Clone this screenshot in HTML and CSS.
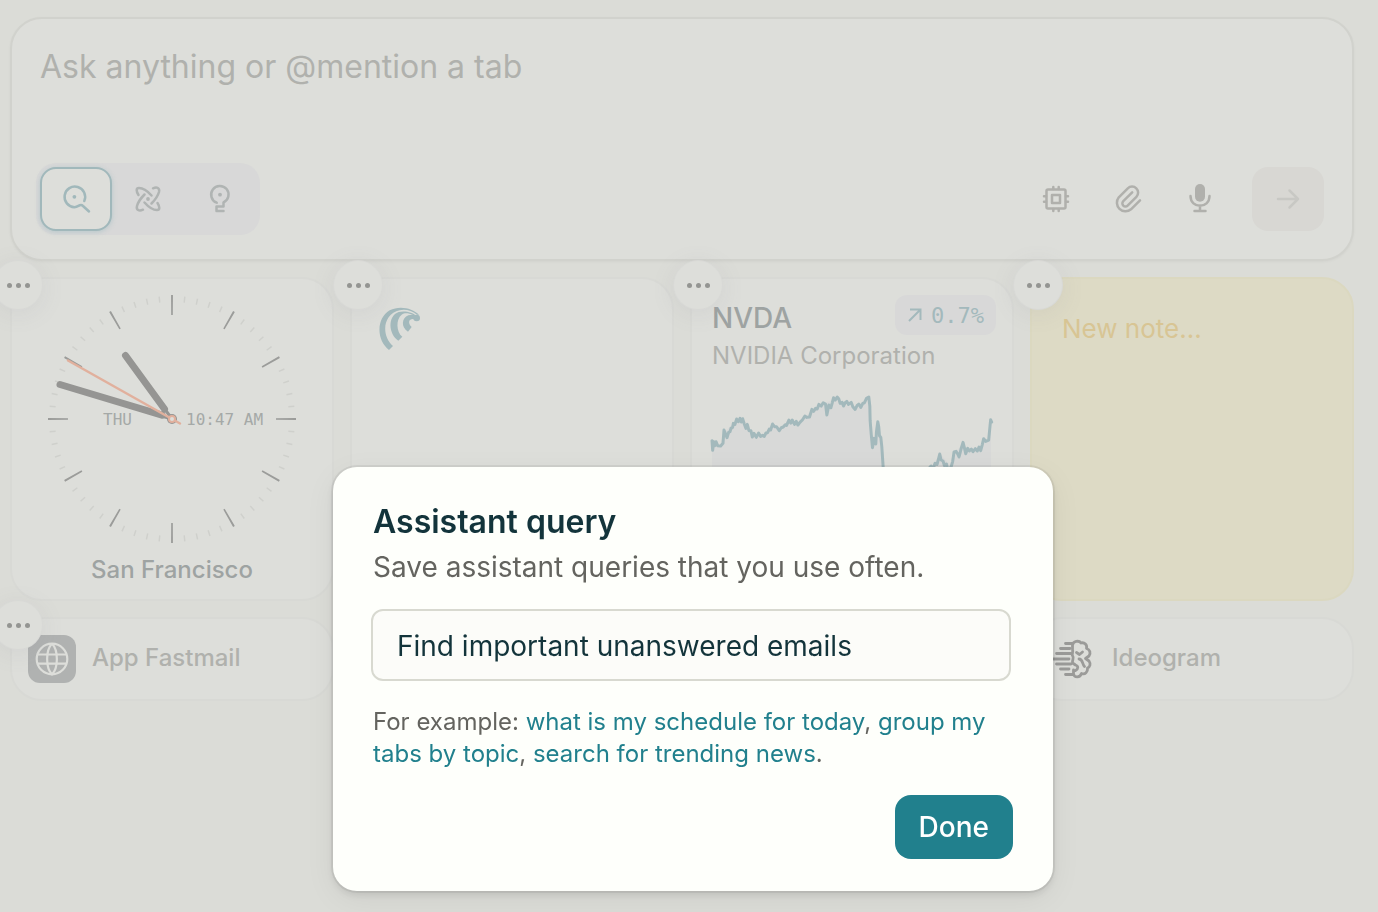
FILE: index.html
```html
<!DOCTYPE html>
<html lang="en">
<head>
  <meta charset="utf-8">
  <title>New Tab</title>
  <link rel="stylesheet" href="styles.css">
</head>
<body>
  <main class="page">
    <form class="ask">
      <textarea class="ask-input" rows="1" aria-label="Ask" placeholder="Ask anything or @mention a tab"></textarea>
      <div class="ask-bar">
        <div class="modes">
          <button type="button" class="mode active" aria-label="Search">
            <svg class="icon" viewBox="0 0 32 32"><path d="M24.3 18A10.3 10.3 0 1 0 14.4 24.2C18 24.2 18.6 22 21 22Q22 22 23 23L29 28.5"/><circle class="fill" cx="14.4" cy="13.8" r="1.9"/></svg>
          </button>
          <button type="button" class="mode" aria-label="Research">
            <svg class="icon" viewBox="0 0 32 32"><path d="M6.5 12C4 8 4 5 7 5C11 5 15.500 8 19.500 12.500M21 5.300C25 3.500 28 5 27 9C26 12.500 23.500 16.500 19.500 20.500M25.500 20C28 24 28 27 25 27C21 27 16.500 24 12.500 19.500M11 26.700C7 28.500 4 27 5 23C6 19.500 8.500 15.500 12.500 11.500"/><circle class="fill" cx="16" cy="16" r="1.9"/></svg>
          </button>
          <button type="button" class="mode" aria-label="Labs">
            <svg class="icon" viewBox="0 0 32 32"><path d="M12.700 19.700A8.700 8.700 0 1 1 19.500 19.500V23.500H12.500V28H19.500"/><circle class="fill" cx="16" cy="11.700" r="1.900"/></svg>
          </button>
        </div>
        <div class="tools">
          <button type="button" class="tool" aria-label="Model">
            <svg class="icon" viewBox="0 0 32 32"><rect x="6.500" y="6.500" width="19" height="19" rx="1.500"/><rect x="12" y="12" width="8" height="8"/><path d="M13.300 4v2M18.700 4v2M13.300 26v2M18.700 26v2M4 13.300h2M4 18.700h2M26 13.300h2M26 18.700h2"/></svg>
          </button>
          <button type="button" class="tool" aria-label="Attach">
            <svg class="icon" viewBox="0 0 32 32"><path d="M28 17.300L19 26.300A8.600 8.600 0 0 1 6.800 14.300L15.800 5.400A6 6 0 0 1 24.400 13.800L15.600 22.600A3 3 0 0 1 11.300 18.200L20.200 9.300"/></svg>
          </button>
          <button type="button" class="tool" aria-label="Dictate">
            <svg class="icon" viewBox="0 0 32 32"><rect class="fill" x="11" y="1" width="10" height="17.700" rx="5"/><path d="M6.500 13C6.500 26 25.500 26 25.500 13M16 22.500V28M10.500 28h11"/></svg>
          </button>
          <button type="submit" class="send" aria-label="Send">
            <svg class="icon" viewBox="0 0 32 32"><path d="M6 16H26M17.500 7.500L26 16L17.500 24.500"/></svg>
          </button>
        </div>
      </div>
    </form>

    <section class="widgets">
      <article class="card tall clock">
        <button class="more" aria-label="Options"><span></span><span></span><span></span></button>
        <svg class="clock-face" viewBox="-124 -124 248 248">
          <circle class="tick-minor" r="120" pathLength="3600"/>
          <circle class="tick-major" r="114" pathLength="3600"/>
          <text class="clock-text" x="-69" y="6">THU</text>
          <text class="clock-text" x="14" y="6">10:47 AM</text>
          <path class="hand-thin" d="M0 0L-8 -11M0 0L-14 -4"/>
          <path class="hand" d="M-46.500 -63.500L-7.500 -10M-112 -34.500L-10 -3.800"/>
          <circle class="hub" r="5"/>
          <path class="hand-second" d="M-104 -58.500L8 4.500"/>
          <circle class="hub-ring" r="3"/>
        </svg>
        <h2 class="clock-city">San Francisco</h2>
      </article>

      <article class="card tall">
        <button class="more" aria-label="Options"><span></span><span></span><span></span></button>
        <svg class="comet" viewBox="148 140 126 130">
          <path d="M178 268C140 238 139 174 180 149C210 133 249 143 268 162L262 162C246 149 226 145 210 149C160 159 153 224 190 256Z"/>
          <path d="M206 240C176 220 173 166 207 154C227 149 249 156 260 165L250 163C236 157 225 156 216 162C198 176 200 214 218 228Z"/>
          <path d="M235 213C213 200 216 171 236 164C245 161 252 162 260 164L258 178C244 169 229 182 246 199Z"/>
          <circle cx="261" cy="172" r="10"/>
        </svg>
      </article>

      <article class="card tall stock">
        <button class="more" aria-label="Options"><span></span><span></span><span></span></button>
        <div class="stock-head">
          <h2 class="stock-symbol">NVDA</h2>
          <span class="stock-change">
            <svg class="stock-arrow" viewBox="0 0 16 16"><path d="M2 14L13.500 2.500M3 2.500H13.500V13"/></svg>
            0.7%
          </span>
        </div>
        <p class="stock-name">NVIDIA Corporation</p>
        <svg class="stock-chart" viewBox="96 396 844 420">
          <path class="area" d="M96 556L120 556L132 520L165 482L185 478L215 528L250 525L280 497L300 508L325 482L355 490L395 452L430 432L470 414L490 435L525 442L568 412L578 560L594 486L612 640V816H96ZM740 640L782 582L816 620L830 574L850 550L860 572L905 570L915 540L928 542L934 482V816H740Z"/>
          <path class="line" d="M96 542L98 571L101 545L104 557L108 545L113 557L122 558L129 550L132 510L137 522L141 533L146 517L150 515L153 505L158 502L160 490L165 493L170 477L175 485L180 475L184 486L188 476L193 492L198 505L202 493L207 512L213 512L217 531L222 520L229 532L236 519L242 529L248 526L253 529L258 519L263 518L268 507L272 510L278 492L284 500L290 500L298 512L304 503L310 501L316 494L320 496L327 480L333 489L337 480L344 493L349 484L354 495L360 487L368 479L375 468L381 472L389 471L396 448L401 454L407 445L412 447L417 433L424 438L430 428L437 432L441 465L447 435L453 443L457 429L461 413L466 420L472 411L477 417L481 430L487 427L491 438L496 428L501 424L506 433L514 427L519 440L526 448L532 436L537 432L543 442L549 430L554 428L560 415L567 411L570 438L571 482L574 520L578 563L583 535L588 552L590 515L594 485L597 502L599 527L603 532L606 560L610 620L614 680L640 720L700 700L748 625L754 618L760 627L766 610L772 613L776 598L780 582L784 600L790 603L794 617L800 612L806 635L815 618L819 604L823 576L829 574L834 582L838 591L844 567L850 547L854 563L858 581L864 565L869 573L875 567L880 575L887 566L893 573L898 561L903 572L908 553L912 536L918 544L927 540L931 498L933 479L936 486"/>
        </svg>
      </article>

      <article class="card tall note">
        <button class="more" aria-label="Options"><span></span><span></span><span></span></button>
        <textarea class="note-text" aria-label="Note" placeholder="New note…"></textarea>
      </article>

      <article class="card link">
        <button class="more" aria-label="Options"><span></span><span></span><span></span></button>
        <a class="link-body" href="#">
          <svg class="link-icon" viewBox="0 0 48 48">
            <rect class="tile" width="48" height="48" rx="12"/>
            <g class="globe"><circle cx="24" cy="24" r="15.300"/><path d="M24 8.700C17.500 15 17.500 33 24 39.300C30.500 33 30.500 15 24 8.700M9.500 19.500H38.500M9.500 28.700H38.500"/></g>
          </svg>
          <span class="link-name">App Fastmail</span>
        </a>
      </article>
      <article class="card link"></article>
      <article class="card link"></article>
      <article class="card link">
        <a class="link-body" href="#">
          <svg class="link-icon" viewBox="0 0 48 48">
            <g class="brain"><path d="M17.500 8.500H25M12.500 13.500H22M8.500 18.500H24M5.500 24H21M8.500 29H23M12.500 34H21M17.500 39.500H25"/><path d="M24.500 14V10C25 6 31 5 33 8C36.500 7 39.500 10 38.500 13.500C42 14.500 43 18 41 21L37.500 23.500L41 26C43 29 42 32 39.500 33C40 37 37 40 33.500 38.500C32 43 26.500 43 25.500 39V35M24.500 14.500C25.500 17 23.500 18.500 24.500 20.500C26.500 23 24 25 24.500 28L27.500 30C30.500 31 30.500 34 27.500 35.500M28.500 17.500L31.500 19.500L34.500 17M31 24C35 24 34 29 36.500 31.500"/></g>
          </svg>
          <span class="link-name">Ideogram</span>
        </a>
      </article>
    </section>
  </main>

  <div class="overlay">
    <form class="dialog" role="dialog" aria-labelledby="dialogTitle">
      <h1 class="dialog-title" id="dialogTitle">Assistant query</h1>
      <label class="dialog-label" for="query">Save assistant queries that you use often.</label>
      <input class="dialog-input" id="query" type="text" value="Find important unanswered emails">
      <p class="dialog-hint">For example: <a href="#">what is my schedule for today</a>, <a href="#">group my tabs by topic</a>, <a href="#">search for trending news</a>.</p>
      <button type="button" class="done">Done</button>
    </form>
  </div>
</body>
</html>
```
FILE: styles.css
```css
* {
  box-sizing: border-box;
}

body {
  margin: 0;
  min-height: 100vh;
  background-color: #dbdcd7;
  color: #9ea3a2;
  font-family: Inter, "Liberation Sans", sans-serif;
  overflow: hidden;
}

h1,
h2,
p {
  margin: 0;
}

button,
input,
textarea {
  font-family: inherit;
  border: none;
  padding: 0;
  background: none;
}

a {
  text-decoration: none;
}

.page {
  padding: 17px 24px 0 10px;
}

/* ask box */
.ask {
  display: flex;
  flex-direction: column;
  justify-content: space-between;
  height: 244px;
  padding: 24px 28px 24px 24px;
  background-color: #dddeda;
  border: 2px solid #d1d2cd;
  border-radius: 32px;
  box-shadow: 0 1px 3px rgba(0, 0, 0, 0.04);
}

.ask-input {
  height: 48px;
  padding: 0 4px;
  font-size: 32px;
  line-height: 48px;
  resize: none;
}

.ask-input::placeholder {
  color: #b0b1ad;
}

.ask-bar {
  display: flex;
  align-items: center;
  justify-content: space-between;
}

.modes {
  display: flex;
  padding: 4px;
  background-color: #d8d8d8;
  border-radius: 20px;
}

.mode,
.tool,
.send {
  display: flex;
  align-items: center;
  justify-content: center;
  width: 72px;
  height: 64px;
  border-radius: 16px;
}

.mode {
  color: #b0b4b3;
}

.mode.active {
  color: #a1b8bb;
  background-color: #dddeda;
  border: 2px solid #a1b8bb;
  box-shadow: 0 1px 5px rgba(130, 175, 182, 0.4);
}

.tools {
  display: flex;
}

.tool {
  color: #b0b0ac;
}

.send {
  margin-left: 16px;
  color: #c8c8c4;
  background-color: #d8d7d3;
}

.icon {
  width: 32px;
  height: 32px;
  fill: none;
  stroke: currentColor;
  stroke-width: 2.5;
  stroke-linecap: round;
  stroke-linejoin: round;
}

.icon .fill {
  fill: currentColor;
  stroke: none;
}

/* widgets */
.widgets {
  display: grid;
  grid-template-columns: repeat(4, 1fr);
  gap: 16px;
  margin-top: 16px;
}

.card {
  position: relative;
  min-width: 0;
  background-color: #dddeda;
  border: 2px solid #d8d9d5;
  border-radius: 32px;
}

.tall {
  height: 324px;
}

.more {
  position: absolute;
  z-index: 1;
  top: -18px;
  left: -18px;
  display: flex;
  align-items: center;
  justify-content: center;
  gap: 4px;
  width: 48px;
  height: 48px;
  background-color: #dddeda;
  border-radius: 50%;
  box-shadow: 0 0 0 1px #d8d9d6, 0 4px 24px rgba(120, 120, 140, 0.12);
}

.more span {
  width: 5px;
  height: 5px;
  background-color: #949592;
  border-radius: 50%;
}

.clock {
  display: flex;
  flex-direction: column;
  align-items: center;
  padding-top: 16px;
}

.clock-face {
  width: 248px;
  height: 248px;
  fill: none;
}

.tick-minor {
  stroke: #cfd0cc;
  stroke-width: 6;
  stroke-dasharray: 7 53;
  stroke-dashoffset: 3.5;
}

.tick-major {
  stroke: #9b9c9a;
  stroke-width: 20;
  stroke-dasharray: 9 291;
  stroke-dashoffset: 4.5;
}

.clock-text {
  fill: #a5a9a7;
  font-family: "DejaVu Sans Mono", monospace;
  font-size: 16px;
}

.hand {
  stroke: #959593;
  stroke-width: 7;
  stroke-linecap: round;
}

.hand-thin {
  stroke: #959593;
  stroke-width: 3;
}

.hub {
  fill: #959593;
}

.hand-second {
  stroke: #e1b09d;
  stroke-width: 2.5;
  stroke-linecap: round;
}

.hub-ring {
  fill: #dddeda;
  stroke: #e1b09d;
  stroke-width: 2;
}

.clock-city {
  margin-top: 11px;
  font-size: 24px;
  line-height: 32px;
  font-weight: 500;
}

.comet {
  display: block;
  width: 42px;
  height: 44px;
  margin: 28px 0 0 27px;
  fill: #a3b9bc;
}

.stock {
  padding: 16px 16px 0 20px;
}

.stock-head {
  display: flex;
  align-items: flex-start;
  justify-content: space-between;
}

.stock-symbol {
  padding-top: 5px;
  font-size: 28px;
  line-height: 36px;
  font-weight: 500;
}

.stock-change {
  display: flex;
  align-items: center;
  gap: 8px;
  height: 40px;
  padding: 0 12px;
  color: #a3b9bc;
  background-color: #d8d8d8;
  border-radius: 12px;
  font-family: "DejaVu Sans Mono", monospace;
  font-size: 22px;
}

.stock-arrow {
  width: 16px;
  height: 16px;
  fill: none;
  stroke: currentColor;
  stroke-width: 2;
}

.stock-name {
  margin-top: 4px;
  color: #b0b1ad;
  font-size: 24px;
  line-height: 32px;
}

.stock-chart {
  display: block;
  width: 281px;
  height: 140px;
  margin-top: 20px;
  overflow: visible;
}

.stock-chart .area {
  fill: #d8d9d8;
}

.stock-chart .line {
  fill: none;
  stroke: #a3b9bc;
  stroke-width: 9;
  stroke-linejoin: round;
  stroke-linecap: round;
}

.note {
  background-color: #dddac5;
  border-color: #dbd8c0;
}

.note-text {
  width: 100%;
  height: 100%;
  padding: 30px;
  font-size: 26px;
  line-height: 40px;
  resize: none;
}

.note-text::placeholder {
  color: #d8c594;
}

.link {
  height: 84px;
}

.link-body {
  display: flex;
  align-items: center;
  gap: 16px;
  height: 100%;
  padding: 0 16px;
  color: #b0b1ad;
  font-size: 24px;
  font-weight: 500;
}

.link-icon {
  width: 48px;
  height: 48px;
}

.link-name {
  padding-bottom: 3px;
}

.tile {
  fill: #b0b2b1;
}

.globe,
.brain {
  fill: none;
  stroke: #dddeda;
  stroke-width: 2.2;
}

.brain {
  stroke: #9b9b99;
  stroke-width: 2.8;
  stroke-linejoin: round;
  stroke-linecap: round;
}

/* dialog */
.overlay {
  position: fixed;
  z-index: 2;
  inset: 0;
  display: flex;
  align-items: flex-end;
  justify-content: center;
  padding: 0 0 21px 8px;
}

.dialog {
  display: flex;
  flex-direction: column;
  width: 720px;
  padding: 36px 40px 32px 38px;
  color: #13343b;
  background-color: #fefffb;
  border-radius: 24px;
  box-shadow: 0 0 0 2px rgba(0, 0, 0, 0.06), 0 4px 8px rgba(0, 0, 0, 0.1), 0 8px 32px rgba(0, 0, 0, 0.06);
}

.dialog-title,
.dialog-label,
.dialog-hint {
  padding-left: 2px;
}

.dialog-title {
  font-size: 32px;
  line-height: 38px;
  font-weight: 600;
}

.dialog-label {
  margin: 8px 0 24px;
  color: #64645f;
  font-size: 28px;
  line-height: 36px;
}

.dialog-input {
  height: 72px;
  margin-right: 2px;
  padding: 2px 24px 0;
  color: #13343b;
  background-color: #fcfcf9;
  border: 2px solid #d8d9d0;
  border-radius: 12px;
  font-size: 28px;
}

.dialog-hint {
  margin: 25px 0;
  color: #64645f;
  font-size: 24px;
  line-height: 32px;
}

.dialog-hint a {
  color: #21808d;
}

.done {
  align-self: flex-end;
  height: 64px;
  padding: 0 24px;
  color: #fff;
  background-color: #21808d;
  border-radius: 16px;
  font-size: 28px;
  font-weight: 500;
}
```
